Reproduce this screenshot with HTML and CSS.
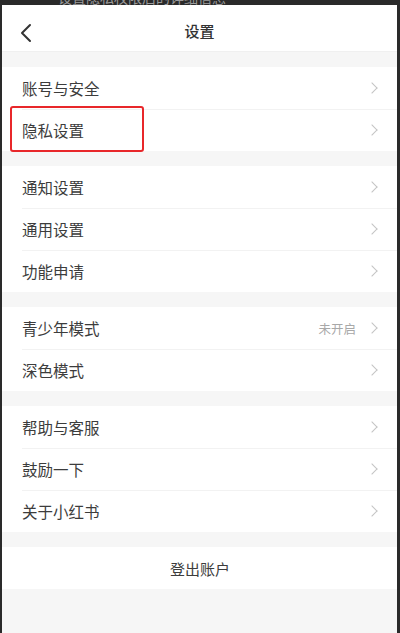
FILE: index.html
```html
<!DOCTYPE html>
<html>
  <head>
    <meta charset="utf-8">
    <title>设置</title>
    <link rel="stylesheet" href="styles.css">
  </head>
  <body>
    <div class="topstrip"><span class="topstrip-text">设置隐私权限后的详细信息</span></div>
    <div class="page">
      <header class="navbar">
        <svg class="back" width="14" height="20" viewBox="0 0 14 20">
          <polyline points="11,2 3,10 11,18" fill="none" stroke="#333" stroke-width="2" stroke-linecap="round" stroke-linejoin="round"/>
        </svg>
        <h1 class="title">设置</h1>
      </header>

      <section class="group">
        <div class="row"><span class="label">账号与安全</span><span class="arrow"></span></div>
        <div class="row highlighted"><span class="label">隐私设置</span><span class="arrow"></span><span class="mark"></span></div>
      </section>

      <section class="group">
        <div class="row"><span class="label">通知设置</span><span class="arrow"></span></div>
        <div class="row"><span class="label">通用设置</span><span class="arrow"></span></div>
        <div class="row"><span class="label">功能申请</span><span class="arrow"></span></div>
      </section>

      <section class="group">
        <div class="row"><span class="label">青少年模式</span><span class="value">未开启</span><span class="arrow"></span></div>
        <div class="row"><span class="label">深色模式</span><span class="arrow"></span></div>
      </section>

      <section class="group">
        <div class="row"><span class="label">帮助与客服</span><span class="arrow"></span></div>
        <div class="row"><span class="label">鼓励一下</span><span class="arrow"></span></div>
        <div class="row"><span class="label">关于小红书</span><span class="arrow"></span></div>
      </section>

      <section class="group">
        <div class="row logout">登出账户</div>
      </section>
    </div>
  </body>
</html>
```

FILE: styles.css
```css
html,
body {
  height: 100%;
}

body {
  margin: 0;
  padding: 0 3px 0 2px;
  display: flex;
  flex-direction: column;
  box-sizing: border-box;
  background-color: #2a2a2a;
  font-family: "Noto Sans CJK SC", "Noto Sans", sans-serif;
  color: #3c3c3c;
}

.topstrip {
  height: 5px;
  overflow: hidden;
  flex: none;
}

.topstrip-text {
  display: block;
  margin: -11px 0 0 56px;
  font-size: 14px;
  line-height: 16px;
  color: #9a9a9a;
}

.page {
  flex: 1;
  background-color: #f6f6f6;
  padding-bottom: 1px;
}

.navbar {
  height: 47px;
  box-sizing: border-box;
  padding-top: 5px;
  display: flex;
  align-items: center;
  justify-content: center;
  position: relative;
  background-color: #fff;
  border-bottom: 1px solid #f0f0f0;
}

.back {
  position: absolute;
  left: 17px;
  top: 18px;
}

.title {
  margin: 0;
  font-size: 15px;
  font-weight: 500;
  color: #333;
}

.group {
  margin-top: 15px;
  background-color: #fff;
}

.row {
  height: 42px;
  display: flex;
  align-items: center;
  padding: 0 19px 0 20px;
  position: relative;
  font-size: 15.5px;
}

.row + .row::before {
  content: "";
  position: absolute;
  top: 0;
  left: 20px;
  right: 0;
  border-top: 1px solid #f2f2f2;
}

.label {
  flex: 1;
}

.value {
  margin-right: 12px;
  font-size: 12.5px;
  color: #a8a8a8;
}

.arrow {
  width: 7px;
  height: 7px;
  margin-right: 2px;
  border-top: 1.5px solid #c4c4c4;
  border-right: 1.5px solid #c4c4c4;
  transform: rotate(45deg);
}

.mark {
  position: absolute;
  left: 8px;
  top: -3px;
  width: 130px;
  height: 42px;
  border: 2px solid #e8272a;
  border-radius: 3px;
}

.logout {
  justify-content: center;
  font-size: 15px;
}
```
